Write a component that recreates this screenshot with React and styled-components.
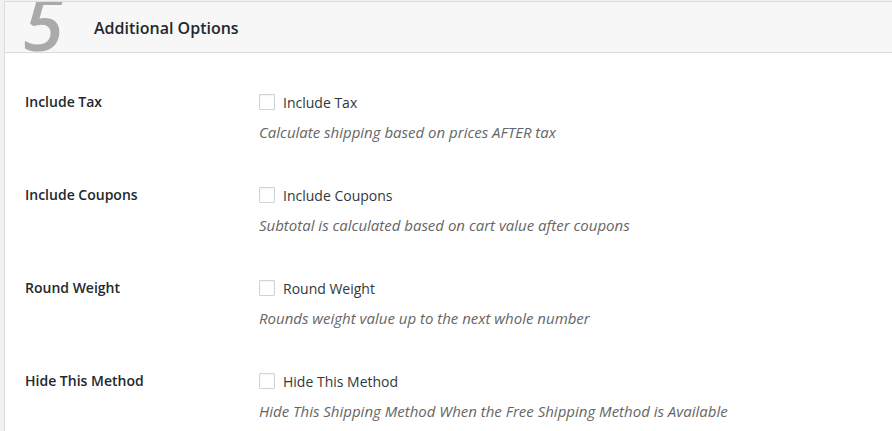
import React from 'react';
import styled, { createGlobalStyle } from 'styled-components';

const GlobalStyle = createGlobalStyle`
    html, body {
        margin: 0;
        padding: 0;
        background: #f1f1f1;
        overflow: hidden;
    }
    body {
        font-family: "Open Sans", "Noto Sans", sans-serif;
    }
`;

const Panel = styled.div`
    margin: 1px 0 0 4px;
    width: 900px;
    background: #fff;
    border-top: 1px solid #dcdcdc;
    border-left: 1px solid #dcdcdc;
    min-height: 440px;
`;

const Header = styled.div`
    display: flex;
    align-items: center;
    height: 50px;
    background: #f7f7f7;
    border-bottom: 1px solid #dcdcdc;
    overflow: hidden;
    padding-left: 18px;
`;

const StepNumber = styled.span`
    width: 71px;
    font-size: 74px;
    font-style: italic;
    font-weight: 600;
    color: #aaa;
    line-height: 1;
    margin-top: -8px;
`;

const Title = styled.h3`
    margin: 0;
    font-size: 16px;
    font-weight: 600;
    color: #23282d;
    margin-top: 1px;
`;

const Body = styled.div`
    padding-top: 18px;
`;

const Row = styled.div`
    display: flex;
    padding: 19px 0 20px 20px;
`;

const Label = styled.div`
    width: 234px;
    font-size: 14px;
    font-weight: 600;
    color: #23282d;
    line-height: 24px;
`;

const Field = styled.div`
    display: flex;
    flex-direction: column;
    gap: 6px;
`;

const CheckLine = styled.label`
    display: flex;
    align-items: center;
    gap: 8px;
    height: 24px;
    font-size: 14px;
    color: #32373c;
`;

const Box = styled.span`
    width: 14px;
    height: 14px;
    border: 1px solid #d2d2d2;
    border-radius: 1px;
    box-shadow: inset 0 1px 2px rgba(0, 0, 0, 0.05);
    background: #fff;
`;

const Description = styled.p`
    margin: 0;
    font-size: 15px;
    font-style: italic;
    color: #666;
    line-height: 24px;
`;

const options = [
    { label: 'Include Tax', desc: 'Calculate shipping based on prices AFTER tax' },
    { label: 'Include Coupons', desc: 'Subtotal is calculated based on cart value after coupons' },
    { label: 'Round Weight', desc: 'Rounds weight value up to the next whole number' },
    { label: 'Hide This Method', desc: 'Hide This Shipping Method When the Free Shipping Method is Available' },
];

function App() {
    return (
        <>
            <GlobalStyle />
            <Panel>
                <Header>
                    <StepNumber>5</StepNumber>
                    <Title>Additional Options</Title>
                </Header>
                <Body>
                    {options.map((o) => (
                        <Row key={o.label}>
                            <Label>{o.label}</Label>
                            <Field>
                                <CheckLine>
                                    <Box />
                                    {o.label}
                                </CheckLine>
                                <Description>{o.desc}</Description>
                            </Field>
                        </Row>
                    ))}
                </Body>
            </Panel>
        </>
    );
}

export default App;
